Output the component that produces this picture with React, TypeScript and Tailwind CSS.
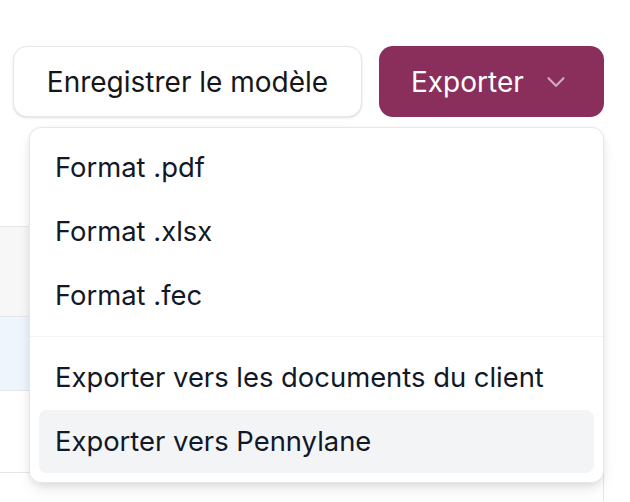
import React from "react";

function Chevron() {
  return (
    <svg width="30" height="30" viewBox="0 0 24 24" fill="none" stroke="currentColor" strokeWidth="1.7" strokeLinecap="round" strokeLinejoin="round">
      <path d="m6 9 6 6 6-6" />
    </svg>
  );
}

export default function App() {
  return (
    <div
      className="relative w-[630px] h-[502px] overflow-hidden bg-white"
      style={{ fontFamily: "Inter, 'Noto Sans', sans-serif" }}
    >
      {/* Header buttons */}
      <div className="flex justify-end items-start gap-[17px] pt-[46px] pr-[26px]">
        <button className="h-[71px] w-[349px] rounded-[14px] border border-gray-200 bg-white shadow-sm text-[28px] text-[#161618] flex items-center justify-center">
          Enregistrer le modèle
        </button>
        <button className="h-[71px] w-[225px] rounded-[14px] bg-[#8a2f5b] text-white text-[28px] flex items-center pl-[32px] pr-[33px] justify-between">
          <span>Exporter</span>
          <span className="text-white/60 flex items-center">
            <Chevron />
          </span>
        </button>
      </div>

      {/* Background table */}
      <div className="mt-[109px] w-[604px] border-r border-gray-200 flex flex-col">
        <div className="h-[90px] bg-[#f7f7f8] border-t border-gray-200" />
        <div className="h-[74px] bg-[#eef5fd] border-t border-gray-200" />
        <div className="h-[83px] bg-white border-t border-b border-gray-200" />
        <div className="h-[60px] bg-white pl-[79px] pt-[19px] text-[26px] leading-[40px] text-[#1c1c1e]">
          2024-01
        </div>
      </div>

      {/* Dropdown */}
      <div className="absolute left-[29px] top-[127px] w-[575px] rounded-[12px] border border-gray-200 bg-white shadow-[0_8px_16px_-4px_rgba(0,0,0,0.12),0_2px_6px_rgba(0,0,0,0.06)] text-[27.4px] text-[#111827]">
        <div className="px-[9px] py-[8px]">
          <div className="h-[64px] flex items-center pl-[16px] rounded-[8px]">Format .pdf</div>
          <div className="h-[64px] flex items-center pl-[16px] rounded-[8px]">Format .xlsx</div>
          <div className="h-[64px] flex items-center pl-[16px] rounded-[8px]">Format .fec</div>
        </div>
        <div className="h-px bg-gray-100" />
        <div className="px-[9px] py-[9px]">
          <div className="h-[64px] flex items-center pl-[16px] rounded-[8px]">
            Exporter vers les documents du client
          </div>
          <div className="h-[63px] flex items-center pl-[16px] rounded-[8px] bg-[#f3f4f6]">
            Exporter vers Pennylane
          </div>
        </div>
      </div>
    </div>
  );
}
